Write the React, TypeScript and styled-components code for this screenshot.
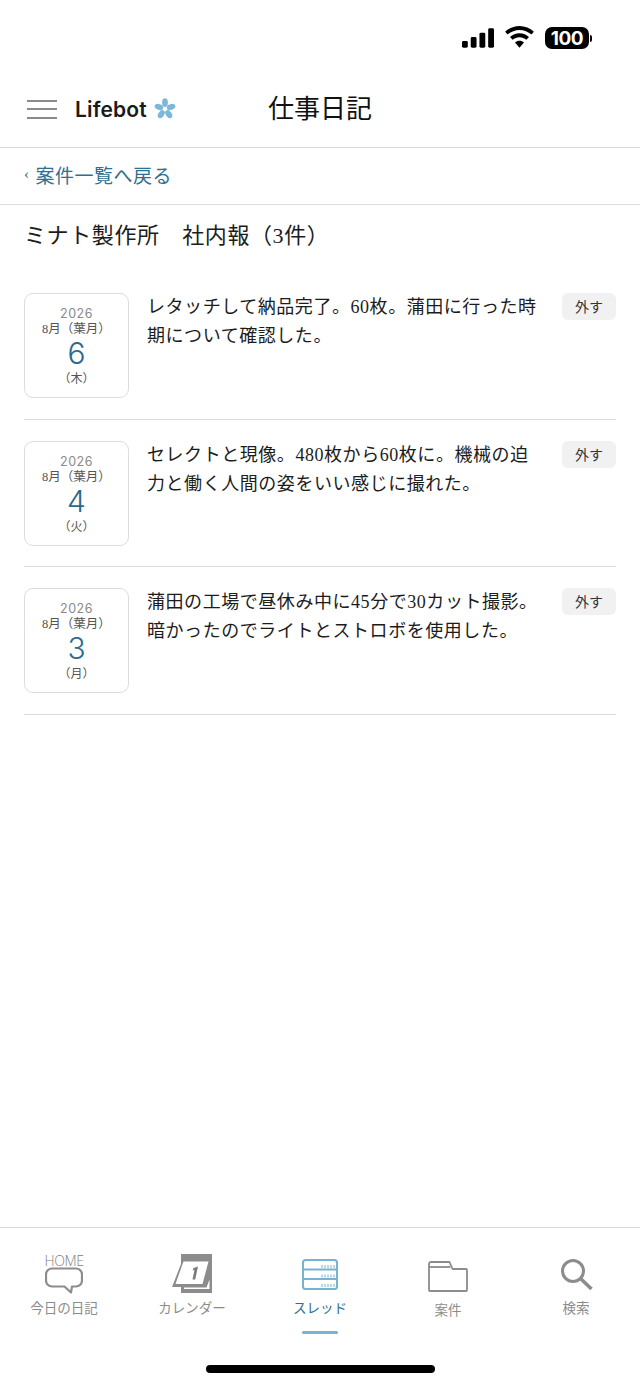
import styled, { createGlobalStyle } from "styled-components";

const GlobalStyle = createGlobalStyle`
  html, body {
    margin: 0;
    padding: 0;
    background: #fff;
  }
  * {
    box-sizing: border-box;
  }
`;

const serif = `"Liberation Serif", "Noto Sans CJK JP", serif`;
const sans = `"Noto Sans CJK JP", "Open Sans", sans-serif`;

const Page = styled.div`
  display: flex;
  flex-direction: column;
  height: 1385px;
  overflow: hidden;
  background: #fff;
  color: #1c1c1c;
  font-family: ${serif};
`;

const StatusBar = styled.div`
  display: flex;
  align-items: center;
  justify-content: flex-end;
  gap: 9px;
  height: 73px;
  padding: 3px 48px 0 0;
`;

const Battery = styled.div`
  display: flex;
  align-items: center;
  gap: 1px;
`;

const BatteryBody = styled.span`
  display: flex;
  align-items: center;
  justify-content: center;
  width: 44px;
  height: 22px;
  border-radius: 7px;
  background: #000;
  color: #fff;
  font: 700 19px/1 "Inter", "Liberation Sans", sans-serif;
  letter-spacing: -0.5px;
`;

const BatteryCap = styled.span`
  width: 2px;
  height: 7px;
  border-radius: 0 2px 2px 0;
  background: #000;
`;

const Header = styled.header`
  position: relative;
  display: flex;
  align-items: center;
  height: 75px;
  padding: 0 0 2px 27px;
  border-bottom: 1px solid #d9d9d9;
`;

const MenuButton = styled.div`
  display: flex;
  flex-direction: column;
  gap: 6.5px;
  width: 30px;
  margin-right: 18px;

  span {
    height: 2px;
    background: #8a8a8a;
  }
`;

const Logo = styled.div`
  display: flex;
  align-items: center;
  gap: 7px;
  font: 600 21px/1 "Inter", "Liberation Sans", sans-serif;
  letter-spacing: 0.15px;
  color: #1a1a1a;
`;

const HeaderTitle = styled.h1`
  position: absolute;
  left: 0;
  right: 0;
  top: 20px;
  margin: 0;
  text-align: center;
  font-size: 26px;
  line-height: 34px;
  font-weight: 400;
  color: #111;
`;

const BackRow = styled.div`
  display: flex;
  align-items: center;
  gap: 6px;
  height: 57px;
  padding: 0 0 3px 24px;
  border-bottom: 1px solid #dedede;
  color: #2f6f8f;
  font-size: 19px;
  letter-spacing: 0.5px;
`;

const BackChevron = styled.span`
  font-size: 15px;
  line-height: 1;
`;

const ThreadTitle = styled.h2`
  margin: 16px 0 0 24px;
  height: 30px;
  font-size: 22px;
  line-height: 30px;
  font-weight: 400;
  letter-spacing: 0.6px;
  white-space: nowrap;
`;

const EntryList = styled.main`
  flex: 1;
  padding: 42px 24px 0;
`;

const Entry = styled.article`
  display: flex;
  align-items: flex-start;
  height: 147.5px;
  padding-top: 21px;
  border-bottom: 1px solid #dcdcdc;

  &:first-child {
    height: 126.5px;
    padding-top: 0;
  }
`;

const DateCard = styled.div`
  display: flex;
  flex-direction: column;
  align-items: center;
  flex: none;
  width: 105px;
  height: 105px;
  padding-top: 12px;
  border: 1px solid #dddddd;
  border-radius: 9px;
`;

const DateYear = styled.span`
  font: 400 12.5px/16px "Inter", "Liberation Sans", sans-serif;
  letter-spacing: 0.5px;
  color: #8a8a8a;
`;

const DateMonth = styled.span`
  font-size: 12.5px;
  line-height: 14px;
  color: #555;
`;

const DateDay = styled.span`
  font: 300 30px/34px "Inter", "Liberation Sans", sans-serif;
  color: #2a6a8c;
`;

const DateWeekday = styled.span`
  margin-top: 2px;
  font-size: 12px;
  line-height: 15px;
  color: #555;
`;

const EntryText = styled.p`
  flex: 1;
  margin: 0;
  padding: 0 22px 0 18px;
  font-size: 18px;
  line-height: 29px;
  letter-spacing: 0.55px;
  color: #1c1c1c;
`;

const RemoveButton = styled.span`
  display: flex;
  align-items: center;
  justify-content: center;
  flex: none;
  width: 54px;
  height: 27px;
  padding-bottom: 1px;
  border-radius: 6px;
  background: #f1f1f1;
  color: #333;
  font-size: 14px;
`;

const TabBar = styled.nav`
  display: grid;
  grid-template-columns: repeat(5, 1fr);
  height: 138px;
  padding-top: 16px;
  border-top: 1px solid #d9d9d9;
`;

const Tab = styled.div<{ $active?: boolean }>`
  position: relative;
  display: flex;
  flex-direction: column;
  align-items: center;
  color: ${(p) => (p.$active ? "#2f6f8f" : "#8c8c8c")};
  font-family: ${sans};
`;

const TabIcon = styled.div<{ $lift?: number }>`
  display: flex;
  flex-direction: column;
  align-items: center;
  justify-content: flex-end;
  height: 51px;
  padding-bottom: ${(p) => p.$lift ?? 0}px;
`;

const TabLabel = styled.span<{ $drop?: number }>`
  margin-top: ${(p) => 3 + (p.$drop ?? 0)}px;
  font-size: 13.5px;
  line-height: 18px;
  white-space: nowrap;
`;

const HomeCaption = styled.span`
  margin-bottom: 1px;
  font: 300 14px/11px "Open Sans", "Liberation Sans", sans-serif;
  letter-spacing: -0.4px;
  color: #808080;
`;

const ActiveMark = styled.span`
  position: absolute;
  top: 87px;
  width: 36px;
  height: 3px;
  border-radius: 2px;
  background: #76b2d2;
`;

const HomeIndicatorRow = styled.div`
  display: flex;
  justify-content: center;
  height: 20px;
`;

const HomeIndicator = styled.span`
  width: 229px;
  height: 8px;
  border-radius: 4px;
  background: #000;
`;

const Signal = () => (
  <svg width="32" height="20" viewBox="0 0 33 20" fill="#000">
    <rect x="0" y="13" width="6" height="7" rx="1.5" />
    <rect x="9" y="9" width="6" height="11" rx="1.5" />
    <rect x="18" y="4.5" width="6" height="15.5" rx="1.5" />
    <rect x="27" y="0" width="6" height="20" rx="1.5" />
  </svg>
);

const Wifi = () => (
  <svg width="33" height="24" viewBox="0 0 30 22" fill="#000">
    <path d="M15 3.6c4.2 0 8 1.6 10.9 4.2l2.3-2.5C24.7 2 20 0 15 0S5.3 2 1.8 5.3l2.3 2.5C7 5.2 10.800 3.600 15 3.600z" />
    <path d="M15 10.300c2.400 0 4.600.9 6.300 2.400l2.400-2.600C21.400 8 18.300 6.700 15 6.700s-6.400 1.300-8.700 3.400l2.400 2.600c1.700-1.500 3.900-2.400 6.300-2.400z" />
    <path d="M15 13.500c-1.600 0-3 .6-4.100 1.600L15 20l4.100-4.900c-1.100-1-2.500-1.600-4.100-1.600z" />
  </svg>
);

const Blossom = () => (
  <svg width="22" height="22" viewBox="-11 -11 22 22" fill="#7db8d9">
    {[0, 72, 144, 216, 288].map((deg) => (
      <ellipse key={deg} cx="0" cy="-6.4" rx="2.900" ry="4.400" transform={`rotate(${deg})`} />
    ))}
  </svg>
);

// speech bubble with its tail off to the right of centre
const HomeBubble = () => (
  <svg width="38" height="27" viewBox="0 0 38 27" fill="none" stroke="#8c8c8c" strokeWidth="2.200">
    <path d="M7 1.500h24a6 6 0 0 1 6 6v6a6 6 0 0 1-6 6h-4l-1 6-6.500-6H7a6 6 0 0 1-6-6v-6a6 6 0 0 1 6-6z" strokeLinejoin="round" />
  </svg>
);

const CalendarIcon = () => (
  <svg width="40" height="40" viewBox="0 0 40 40">
    <path d="M9 0h31v39H9v-6H0l9-23z" fill="#8c8c8c" />
    <path d="M11.500 7.500h25L30.500 30H3.500z" fill="#fff" />
    <path d="M12 33.500h22.500l3-8v9.500H12z" fill="#fff" />
    <path d="M21.500 14l4.500-1.500-2.800 13h-2.700l2-9.500-1.800.5z" fill="#7c7c7c" />
  </svg>
);

const ThreadIcon = () => (
  <svg width="36" height="31" viewBox="0 0 36 31" fill="none" stroke="#76b2d2" strokeWidth="2">
    <rect x="1" y="1" width="34" height="29" rx="2.500" />
    <path d="M1 10.500h34M1 20h34" />
    <path d="M20 6v3M23 6v3M26 6v3M29 6v3M32 6v3M20 15.500v3M23 15.500v3M26 15.500v3M29 15.500v3M32 15.500v3M20 25v3M23 25v3M26 25v3M29 25v3M32 25v3" strokeWidth="1" />
  </svg>
);

const FolderIcon = () => (
  <svg width="40" height="31" viewBox="0 0 40 31" fill="none" stroke="#8c8c8c" strokeWidth="1.800" strokeLinejoin="round">
    <path d="M1 29V3a2 2 0 0 1 2-2h18.500l3 7H38a1 1 0 0 1 1 1v20a1 1 0 0 1-1 1H2a1 1 0 0 1-1-1z" />
    <path d="M1 6h21.500" />
  </svg>
);

const SearchIcon = () => (
  <svg width="33" height="33" viewBox="0 0 33 33" fill="none" stroke="#8c8c8c">
    <circle cx="13" cy="13" r="10.500" strokeWidth="3" />
    <path d="M21 21l10.500 10" strokeWidth="3.600" />
  </svg>
);

const entries = [
  {
    id: 1,
    day: 6,
    weekday: "（木）",
    text: "レタッチして納品完了。60枚。蒲田に行った時期について確認した。",
  },
  {
    id: 2,
    day: 4,
    weekday: "（火）",
    text: "セレクトと現像。480枚から60枚に。機械の迫力と働く人間の姿をいい感じに撮れた。",
  },
  {
    id: 3,
    day: 3,
    weekday: "（月）",
    text: "蒲田の工場で昼休み中に45分で30カット撮影。暗かったのでライトとストロボを使用した。",
  },
];

const App = () => (
  <>
    <GlobalStyle />
    <Page>
      <StatusBar>
        <Signal />
        <Wifi />
        <Battery>
          <BatteryBody>100</BatteryBody>
          <BatteryCap />
        </Battery>
      </StatusBar>

      <Header>
        <MenuButton>
          <span />
          <span />
          <span />
        </MenuButton>
        <Logo>
          Lifebot
          <Blossom />
        </Logo>
        <HeaderTitle>仕事日記</HeaderTitle>
      </Header>

      <BackRow>
        <BackChevron>‹</BackChevron>
        案件一覧へ戻る
      </BackRow>

      <ThreadTitle>ミナト製作所　社内報（3件）</ThreadTitle>

      <EntryList>
        {entries.map((entry) => (
          <Entry key={entry.id}>
            <DateCard>
              <DateYear>2026</DateYear>
              <DateMonth>8月（葉月）</DateMonth>
              <DateDay>{entry.day}</DateDay>
              <DateWeekday>{entry.weekday}</DateWeekday>
            </DateCard>
            <EntryText>{entry.text}</EntryText>
            <RemoveButton>外す</RemoveButton>
          </Entry>
        ))}
      </EntryList>

      <TabBar>
        <Tab>
          <TabIcon $lift={1}>
            <HomeCaption>HOME</HomeCaption>
            <HomeBubble />
          </TabIcon>
          <TabLabel>今日の日記</TabLabel>
        </Tab>
        <Tab>
          <TabIcon $lift={1}>
            <CalendarIcon />
          </TabIcon>
          <TabLabel>カレンダー</TabLabel>
        </Tab>
        <Tab $active>
          <TabIcon $lift={5}>
            <ThreadIcon />
          </TabIcon>
          <TabLabel>スレッド</TabLabel>
          <ActiveMark />
        </Tab>
        <Tab>
          <TabIcon $lift={3}>
            <FolderIcon />
          </TabIcon>
          <TabLabel $drop={2}>案件</TabLabel>
        </Tab>
        <Tab>
          <TabIcon $lift={4}>
            <SearchIcon />
          </TabIcon>
          <TabLabel>検索</TabLabel>
        </Tab>
      </TabBar>

      <HomeIndicatorRow>
        <HomeIndicator />
      </HomeIndicatorRow>
    </Page>
  </>
);

export default App;
